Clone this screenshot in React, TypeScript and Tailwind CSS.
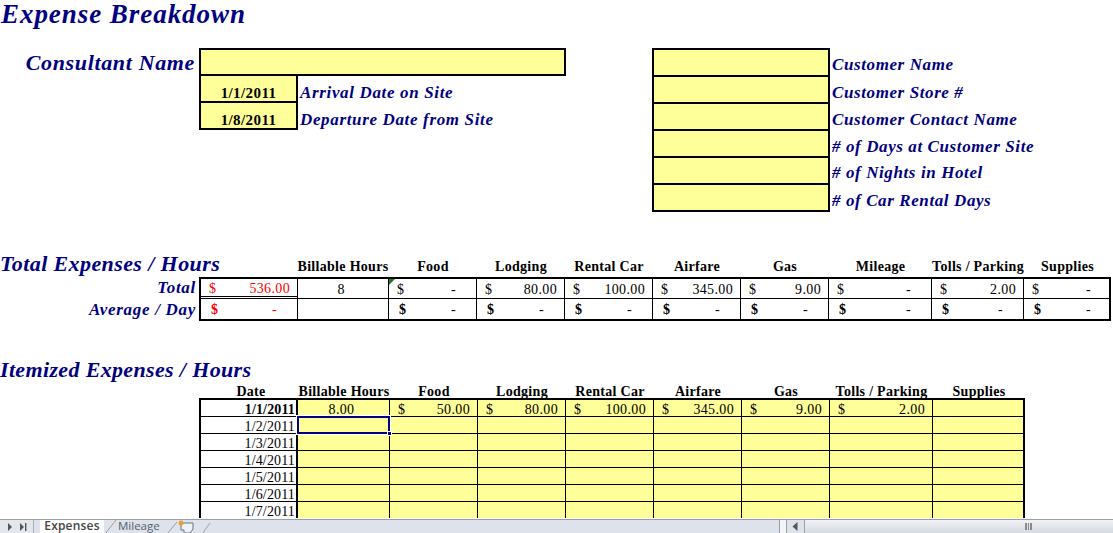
const HEAD = ["Billable Hours", "Food", "Lodging", "Rental Car", "Airfare", "Gas", "Mileage", "Tolls / Parking", "Supplies"];
const W1 = ["w-[92px]", "w-[88px]", "w-[88px]", "w-[88px]", "w-[88px]", "w-[88px]", "w-[103px]", "w-[92px]", "w-[87px]"];
const TOTALS = ["80.00", "100.00", "345.00", "9.00", "-", "2.00", "-"];
const TITLE = "font-['Liberation_Serif',serif] font-bold italic text-[#000080]";

function Money({ v, w, bold, red, last }: { v: string; w: string; bold?: boolean; red?: boolean; last?: boolean }) {
  return (
    <div className={`${w} flex items-center justify-between pl-[8px] pr-[7px] tracking-[0.35px] ${last ? "" : "border-r border-black"} ${red ? "text-[#ff0000]" : "text-black"}`}>
      <span className={bold ? "pl-[2px] font-bold" : ""}>$</span>
      <span className={v === "-" ? "pr-[13px]" : ""}>{v}</span>
    </div>
  );
}

function Field({ label, tight }: { label: string; tight?: boolean }) {
  return (
    <div className="flex h-[27px]">
      <div className="w-[178px] shrink-0 border-x-2 border-b-2 border-black bg-[#ffff99]" />
      <div className={`${TITLE} pl-[2px] ${tight ? "pt-[5px]" : "pt-[6px]"} text-[17px] leading-[20px] tracking-[0.6px]`}>{label}</div>
    </div>
  );
}

function ItemRow({ date, first, sel }: { date: string; first?: boolean; sel?: boolean }) {
  const cols = ["w-[92px]", "w-[88px]", "w-[88px]", "w-[88px]", "w-[88px]", "w-[88px]", "w-[103px]", "w-[90px]"];
  const vals = ["8.00", "50.00", "80.00", "100.00", "345.00", "9.00", "2.00", ""];
  return (
    <div className={`flex shrink-0 ${first ? "h-[16px]" : "h-[17px] border-t border-black"}`}>
      <div className={`w-[97px] shrink-0 border-r-2 border-black pr-[1px] text-right text-[14px] leading-[20px] tracking-[0.15px] ${first ? "font-bold" : ""}`}>{date}</div>
      {cols.map((w, i) => {
        const on = sel && i === 0;
        return (
          <div key={i} className={`${w} relative shrink-0 bg-[#ffff99] text-[14px] leading-[20px] tracking-[0.35px] ${i < 7 ? "border-r border-black" : ""}`}>
            {first && i === 0 && <div className="pr-[4px] text-center">{vals[0]}</div>}
            {first && i > 0 && i < 7 && (
              <div className="flex justify-between pl-[8px] pr-[7px]"><span>$</span><span>{vals[i]}</span></div>
            )}
            {on && (
              <>
                <div className="absolute -bottom-[1px] -left-[1px] -right-[1px] -top-[1px] z-10 border-2 border-[#000080] outline outline-1 outline-white" />
                <div className="absolute -bottom-[3px] -right-[3px] z-20 h-[5px] w-[5px] border border-white bg-[#000080]" />
              </>
            )}
          </div>
        );
      })}
    </div>
  );
}

export default function App() {
  return (
    <div className="flex h-[533px] w-[1113px] flex-col overflow-hidden bg-white font-['Liberation_Serif',serif] text-black">
      <div className="flex-1 overflow-hidden">
        <h1 className={`${TITLE} -mt-[1px] h-[49px] pl-[1px] text-[27px] leading-[30px] tracking-[0.95px]`}>Expense Breakdown</h1>

        <div className="flex h-[200px]">
          <div className="w-[652px] shrink-0">
            <div className="flex h-[28px]">
              <div className={`${TITLE} w-[199px] shrink-0 pr-[4px] pt-[2px] text-right text-[22px] leading-[26px] tracking-[0.65px]`}>Consultant Name</div>
              <div className="w-[367px] border-2 border-black bg-[#ffff99]" />
            </div>
            {[["1/1/2011", "Arrival Date on Site"], ["1/8/2011", "Departure Date from Site"]].map(([d, l], i) => (
              <div key={d} className="ml-[199px] flex h-[27px]">
                <div className={`w-[99px] shrink-0 border-x-2 border-b-2 border-black bg-[#ffff99] pt-[8px] text-center text-[15px] font-bold leading-[18px] tracking-[0.4px]`}>{d}</div>
                <div className={`${TITLE} pl-[2px] pt-[7px] text-[17px] leading-[20px] tracking-[0.65px]`}>{l}</div>
              </div>
            ))}
          </div>
          <div className="flex-1">
            <div className="w-[178px] border-t-2 border-black" />
            {["Customer Name", "Customer Store #", "Customer Contact Name", "# of Days at Customer Site", "# of Nights in Hotel", "# of Car Rental Days"].map((l, i) => (
              <Field key={l} label={l} tight={i === 0 || i === 4} />
            ))}
          </div>
        </div>

        <div className="flex h-[29px] items-end pb-[2px]">
          <div className={`${TITLE} w-[297px] shrink-0 pt-[1px] text-[22px] leading-[22px] tracking-[0.4px]`}>Total Expenses / Hours</div>
          {HEAD.map((h, i) => (
            <div key={h} className={`${W1[i]} shrink-0 text-center text-[14px] font-bold leading-[16px] tracking-[0.3px]`}>{h}</div>
          ))}
        </div>

        <div className="flex">
          <div className={`${TITLE} w-[199px] shrink-0 pr-[3px] text-right text-[17px] tracking-[0.7px]`}>
            <div className="h-[22px] leading-[22px]">Total</div>
            <div className="h-[21px] leading-[22px]">Average / Day</div>
          </div>
          <div className="w-[912px] border-2 border-black text-[14px] leading-[19px]">
            <div className="flex h-[20px] border-b border-black">
              <Money v="536.00" w="h-[18px] w-[96px] shrink-0 self-start !border-r-0 border-b border-b-black pt-[1px]" red />
              <div className="w-[92px] shrink-0 border-x border-black pr-[4px] pt-[1px] text-center">8</div>
              <div className="relative flex">
                <div className="absolute left-0 top-0 h-0 w-0 border-r-[6px] border-t-[6px] border-r-transparent border-t-[#1f7a2c]" />
                <Money v="-" w="w-[88px] shrink-0 pt-[1px]" />
              </div>
              {W1.slice(2).map((w, i) => (
                <Money key={i} v={TOTALS[i]} w={`${w} shrink-0 pt-[1px]`} last={i === 6} />
              ))}
            </div>
            <div className="flex h-[20px]">
              <Money v="-" w="w-[96px] shrink-0 !border-r-0" red bold />
              <div className="w-[92px] shrink-0 border-x border-black" />
              {W1.slice(1).map((w, i) => (
                <Money key={i} v="-" w={`${w} shrink-0`} bold last={i === 7} />
              ))}
            </div>
          </div>
        </div>

        <div className={`${TITLE} mt-[36px] h-[27px] text-[22px] leading-[26px] tracking-[0.35px]`}>Itemized Expenses / Hours</div>

        <div className="flex h-[14px] pl-[199px] text-center text-[14px] font-bold leading-[16px] tracking-[0.3px]">
          <div className="w-[99px] shrink-0 pl-[5px]">Date</div>
          <div className="w-[92px] shrink-0">Billable Hours</div>
          <div className="w-[88px] shrink-0">Food</div>
          <div className="w-[88px] shrink-0">Lodging</div>
          <div className="w-[88px] shrink-0">Rental Car</div>
          <div className="w-[88px] shrink-0">Airfare</div>
          <div className="w-[88px] shrink-0">Gas</div>
          <div className="w-[103px] shrink-0">Tolls / Parking</div>
          <div className="w-[92px] shrink-0">Supplies</div>
        </div>

        <div className="ml-[199px] w-[826px] border-x-2 border-t-2 border-black">
          {["1/1/2011", "1/2/2011", "1/3/2011", "1/4/2011", "1/5/2011", "1/6/2011", "1/7/2011"].map((d, i) => (
            <ItemRow key={d} date={d} first={i === 0} sel={i === 1} />
          ))}
        </div>
      </div>

      <div className="flex h-[14px] shrink-0 border-t border-[#9aa0a8] bg-[#dee2ea] font-['Open_Sans',sans-serif] text-[12px] leading-[12px] text-[#4a5568]">
        <div className="flex h-full w-[34px] shrink-0 items-center gap-[6px] border-r border-[#aab0ba] bg-[#e3e6ec] pl-[7px]">
          <svg width="6" height="8" viewBox="0 0 6 8"><path d="M1 0l4 4-4 4z" fill="#555" /></svg>
          <svg width="8" height="8" viewBox="0 0 8 8"><path d="M1 0l4 4-4 4z M6 0h1.4v8H6z" fill="#555" /></svg>
        </div>
        <div className="ml-[6px] w-[64px] shrink-0 bg-white text-center font-semibold tracking-[0.2px] text-[#444]">Expenses</div>
        <svg width="14" height="14" viewBox="0 0 14 14" className="shrink-0"><path d="M1 14L12 0" stroke="#9aa0a8" fill="none" /></svg>
        <div className="w-[46px] shrink-0 text-[11.5px] text-[#56606e]">Mileage</div>
        <svg width="50" height="14" viewBox="0 0 50 14" className="shrink-0">
          <path d="M3 14L13 2" stroke="#9aa0a8" fill="none" />
          <path d="M17 3h12v6l-3 4h-6v-3h-3z" fill="#eef2f8" stroke="#5f7690" />
          <circle cx="17" cy="3" r="2.5" fill="#e9a320" />
          <path d="M38 14L46 3" stroke="#9aa0a8" fill="none" />
        </svg>
        <div className="flex-1" />
        <div className="flex h-full w-[25px] shrink-0 items-center">
          <div className="h-full w-[8px] border-x border-[#9aa0a8] bg-[#f4f5f7]" />
          <svg width="6" height="9" viewBox="0 0 6 9" className="ml-[5px]"><path d="M5.5 0L.5 4.5 5.5 9z" fill="#555" /></svg>
        </div>
        <div className="flex h-full w-[309px] shrink-0 items-center border-l border-[#9aa0a8] bg-gradient-to-b from-[#f0f2f5] to-[#d6dae1] pl-[220px]">
          <div className="h-[7px] w-[7px] border-x border-[#888] bg-[repeating-linear-gradient(90deg,#888_0,#888_1px,transparent_1px,transparent_2px)]" />
        </div>
      </div>
    </div>
  );
}
